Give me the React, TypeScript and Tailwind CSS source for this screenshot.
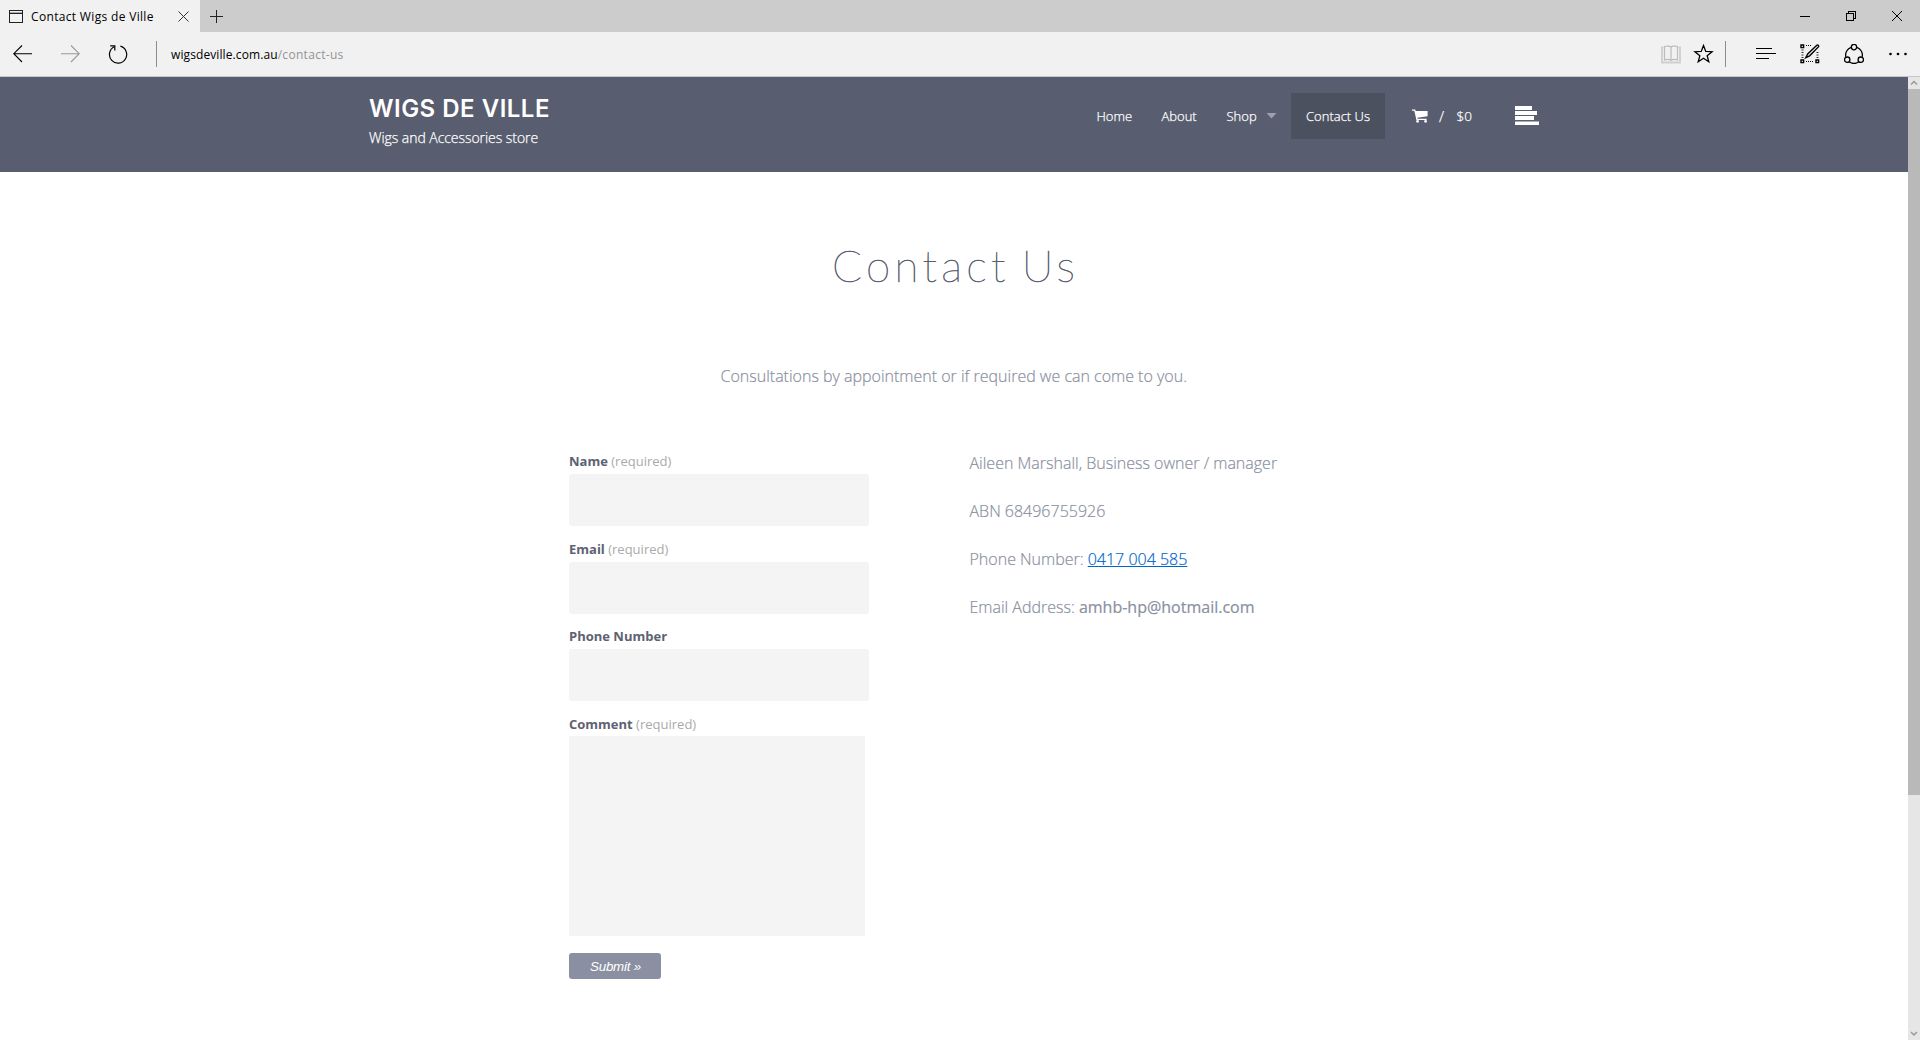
import React from "react";

function TabStrip() {
  return (
    <div className="flex h-8 bg-[#cccccc]">
      <div className="flex w-[200px] items-center bg-[#f1f1f1] pl-[9px]">
        <svg width="14" height="13" viewBox="0 0 14 13" fill="none" stroke="#222" shapeRendering="crispEdges">
          <path d="M.5 .5h13v11.5h-13z" />
          <path d="M1 2h12" stroke="#aaa" />
          <path d="M1 3.5h12" />
        </svg>
        <span className="ml-2 mt-px w-[147px] whitespace-nowrap text-[12px] leading-4 tracking-[0.33px] text-black">Contact Wigs de Ville</span>
        <svg width="11" height="11" viewBox="0 0 11 11" fill="none" stroke="#333">
          <path d="M.5 .5l10 10M10.5 .5l-10 10" />
        </svg>
      </div>
      <svg className="ml-[10px] mt-[10px]" width="13" height="13" viewBox="0 0 13 13" fill="none" stroke="#222" shapeRendering="crispEdges">
        <path d="M6.5 0v13M0 6.5h13" />
      </svg>
      <div className="ml-auto flex pr-[18px]">
        <svg className="mt-[11px]" width="10" height="11" viewBox="0 0 10 11" stroke="#000" shapeRendering="crispEdges">
          <path d="M0 5.5h10" />
        </svg>
        <svg className="ml-9 mt-[11px]" width="10" height="10" viewBox="0 0 10 10" fill="none" stroke="#000" shapeRendering="crispEdges">
          <path d="M.5 2.5h7v7h-7zM2.5 2.5v-2h7v7h-2" />
        </svg>
        <svg className="ml-9 mt-[11px]" width="10" height="10" viewBox="0 0 10 10" fill="none" stroke="#000">
          <path d="M0 0l10 10M10 0l-10 10" />
        </svg>
      </div>
    </div>
  );
}

function AddressBar() {
  return (
    <div className="flex h-[45px] items-center border-b border-[#c6c8c8] bg-[#f1f1f1]">
      <svg className="ml-[13px]" width="19" height="18" viewBox="0 0 19 18" fill="none" stroke="#000" strokeWidth="1.1">
        <path d="M9 .5L.8 8.7 9 17M.8 8.7H19" />
      </svg>
      <svg className="ml-[29px]" width="19" height="18" viewBox="0 0 19 18" fill="none" stroke="#999" strokeWidth="1.1">
        <path d="M10 .5l8.2 8.2L10 17M18.2 8.7H0" />
      </svg>
      <svg className="ml-[28px]" width="20" height="20" viewBox="0 0 20 20" fill="none" stroke="#000" strokeWidth="1.2">
        <path d="M12.4 2.2A8.6 8.6 0 1 1 6.2 2.8" />
        <path d="M2.2 1.8h4.6v4.6" />
      </svg>
      <div className="ml-[28px] h-[26px] w-px bg-[#8d8d8d]" />
      <div className="ml-[14px] mt-px whitespace-nowrap text-[12px] leading-4 tracking-[0.17px] text-black">
        <span className="tracking-[0.1px]">wigsdeville.com.au</span>
        <span className="tracking-[0.3px] text-[#949494]">/contact-us</span>
      </div>
      <div className="ml-auto flex items-center pr-[13px]">
        <svg width="20" height="19" viewBox="0 0 20 19" fill="none" stroke="#bcbcbc">
          <path d="M2.500 2.500H1v15h18v-15h-1.500" strokeWidth="1.800" stroke="#cfcfcf" />
          <path d="M10 2C9 .9 5 .9 3.500 1.500V15c1.500-.5 5-.5 6.500.5 1.500-1 5-1 6.500-.5V1.500C15 .9 11 .9 10 2V15.500" strokeWidth="1.200" />
        </svg>
        <svg className="ml-[11.500px] mr-[.5px]" width="21" height="20" viewBox="0 0 21 20" fill="none" stroke="#000" strokeWidth="1.3">
          <path d="M10.500 1.500l2.250 5.900 6.300.3-4.900 3.950 1.650 6.100-5.300-3.450-5.300 3.450 1.650-6.100L1.950 7.700l6.300-.3z" />
        </svg>
        <div className="ml-[11px] h-[26px] w-px bg-[#8d8d8d]" />
        <svg className="ml-[30px]" width="20" height="20" viewBox="0 0 20 20" stroke="#000" shapeRendering="crispEdges">
          <path d="M0 4.500h16M0 9.500h20M0 14.500h13" />
        </svg>
        <svg className="ml-[24px]" width="20" height="20" viewBox="0 0 20 20" fill="none" stroke="#000">
          <path d="M1 1h2.600v2.600H1zM1 16h2.600v2.600H1zM16 16h2.600v2.600H16z" strokeWidth="1.400" />
          <path d="M6 1.500h6M6 17.500h8" strokeDasharray="1 1" />
          <path d="M1.500 6h2M1.500 8.500h2M1.500 11h2M1.500 13.500h2M16.500 8.500h2M16.500 11h2M16.500 13.500h2" strokeWidth=".8" />
          <path d="M16.800 1.200c1-.8 2.400.6 1.600 1.700L9.600 11.800l-3.800 1.800 1.900-3.600z" strokeWidth="1.400" />
        </svg>
        <svg className="ml-[24px]" width="20" height="20" viewBox="0 0 20 20" fill="none" stroke="#000" strokeWidth="1.300">
          <path d="M7.200 3.300A8.300 8.300 0 0 0 1.800 12.800M12.800 3.300a8.300 8.300 0 0 1 5.400 9.500M5.200 17.800a8.300 8.300 0 0 0 9.600 0" />
          <circle cx="10" cy="3.100" r="2.700" />
          <circle cx="3.200" cy="15.700" r="2.700" />
          <circle cx="16.800" cy="15.700" r="2.700" />
        </svg>
        <svg className="ml-[25px]" width="18" height="4" viewBox="0 0 18 4">
          <circle cx="1.500" cy="2" r="1.350" />
          <circle cx="9" cy="2" r="1.350" />
          <circle cx="16.500" cy="2" r="1.350" />
        </svg>
      </div>
    </div>
  );
}

function SiteHeader() {
  return (
    <header className="flex h-[95px] bg-[#585d6f] pl-[369px] text-white">
      <div className="w-[713px] pt-[16px]">
        <div className="whitespace-nowrap font-['Inter'] text-[24px] font-semibold leading-[32px] tracking-[0.500px]">WIGS DE VILLE</div>
        <div className="mt-px whitespace-nowrap text-[14px] font-light leading-[24px] tracking-[-0.05px] [-webkit-text-stroke:0.25px_white]">Wigs and Accessories store</div>
      </div>
      <nav className="mt-[16px] flex h-[46px] items-center whitespace-nowrap text-[13px] font-light leading-[20px] [-webkit-text-stroke:0.25px_white]">
        <span className="ml-[14.5px] w-[65px]">Home</span>
        <span className="w-[65px]">About</span>
        <span className="w-[39.5px]">Shop</span>
        <svg className="-mt-[1px]" width="11" height="6" viewBox="0 0 11 6" fill="#9d9fac">
          <path d="M.500 0h10L5.500 5.500z" />
        </svg>
        <span className="ml-[14px] flex h-full w-[94px] items-center justify-center bg-[#4c5160]">Contact Us</span>
        <svg className="ml-[27px]" width="16" height="14" viewBox="0 0 16 14" fill="#fff">
          <path d="M0 .5h3.200l.5 1.500H15.600v5.300L5.300 8.700l.3 1.100h9v1.200H4.400L2.300 1.800H0z" />
          <circle cx="5.600" cy="12.300" r="1.400" />
          <circle cx="13.600" cy="12.300" r="1.400" />
        </svg>
        <span className="ml-[11px] w-[17.500px] text-[15px]">/</span>
        <span className="w-[58.500px] text-[13.500px]">$0</span>
        <svg className="-mt-[2px]" width="24" height="19" viewBox="0 0 24 19" fill="#fff">
          <path d="M0 0h17v4H0zM0 5h22v4H0zM0 10h19v4H0zM0 15.500h24V19H0z" />
        </svg>
      </nav>
    </header>
  );
}

function Field({ label, required }: { label: string; required?: boolean }) {
  return (
    <label className="mb-[12.500px] block">
      <span className="block whitespace-nowrap text-[13px] font-bold leading-[20px] text-[#5d6272]">
        {label}
        {required && <span className="font-normal text-[#aaaaaa]"> (required)</span>}
      </span>
      <input className="mt-[3px] block h-[52px] w-[300px] rounded-[3px] bg-[#f4f4f4] outline-none" />
    </label>
  );
}

function ContactForm() {
  return (
    <form className="w-[400.500px] pt-[1px]">
      <Field label="Name" required />
      <Field label="Email" required />
      <Field label="Phone Number" />
      <label className="block">
        <span className="block whitespace-nowrap text-[13px] font-bold leading-[20px] text-[#5d6272]">
          Comment<span className="font-normal text-[#aaaaaa]"> (required)</span>
        </span>
        <textarea className="mt-[2px] block h-[200px] w-[296px] resize-none bg-[#f4f4f4] outline-none" />
      </label>
      <button type="button" className="mt-[17px] block h-[26px] w-[92px] rounded-[3px] bg-[#8a90a1] pl-px pt-px font-['Liberation_Sans'] text-[13.333px] italic leading-[25px] tracking-[-0.2px] text-white">
        Submit »
      </button>
    </form>
  );
}

function Scrollbar() {
  return (
    <div className="flex w-[12px] flex-col bg-[#e6e6e6]">
      <svg width="12" height="12" viewBox="0 0 12 12" fill="none" stroke="#999" strokeWidth="1.500">
        <path d="M3 7.500l3-3 3 3" />
      </svg>
      <div className="h-[706px] bg-[#b9b9b9]" />
      <svg className="mt-auto" width="12" height="12" viewBox="0 0 12 12" fill="none" stroke="#999" strokeWidth="1.500">
        <path d="M3 4l3 3 3-3" />
      </svg>
    </div>
  );
}

export default function App() {
  return (
    <div className="flex h-[1040px] w-[1920px] flex-col overflow-hidden bg-white font-['Open_Sans',sans-serif]">
      <TabStrip />
      <AddressBar />
      <div className="flex flex-1">
        <div className="w-[1908px]">
          <SiteHeader />
          <main>
            <h1 className="mt-[60px] h-[66px] whitespace-nowrap pl-[832px] font-['Lato'] text-[44px] font-thin leading-[66px] tracking-[4.300px] text-[#585d6f] [-webkit-text-stroke:0.6px_#585d6f] [word-spacing:-5px]">Contact Us</h1>
            <p className="mt-[66px] whitespace-nowrap pl-[720.500px] text-[16px] font-light leading-[24px] text-[#8a90a1] [-webkit-text-stroke:0.2px_#8a90a1]">
              Consultations by appointment or if required we can come to you.
            </p>
            <div className="mt-[62px] flex pl-[569px]">
              <ContactForm />
              <div className="flex flex-col gap-6 whitespace-nowrap pt-[1px] text-[16px] font-light leading-[24px] text-[#8a90a1] [-webkit-text-stroke:0.2px_currentColor]">
                <p>Aileen Marshall, Business owner / manager</p>
                <p>ABN 68496755926</p>
                <p>
                  Phone Number: <a className="text-[#0066cc] underline">0417 004 585</a>
                </p>
                <p>
                  Email Address: <span className="font-normal">amhb-hp@hotmail.com</span>
                </p>
              </div>
            </div>
          </main>
        </div>
        <Scrollbar />
      </div>
    </div>
  );
}
